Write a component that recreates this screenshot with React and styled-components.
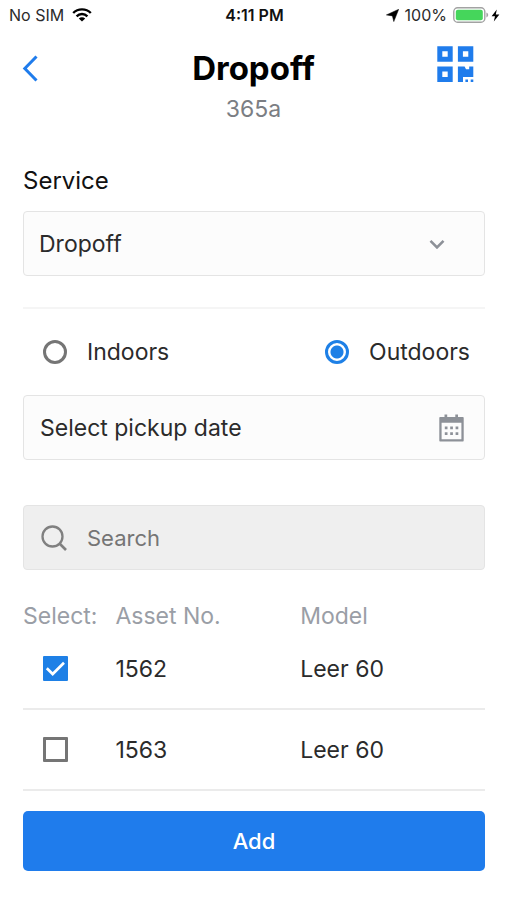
import { useState } from 'react'
import styled, { createGlobalStyle } from 'styled-components'

const assets = [
    { id: '1562', model: 'Leer 60' },
    { id: '1563', model: 'Leer 60' },
]

export default function App() {
    const [place, setPlace] = useState('outdoors')
    const [selected, setSelected] = useState(['1562'])

    const toggle = (id) => {
        setSelected(selected.includes(id) ? selected.filter((s) => s !== id) : [...selected, id])
    }

    return <>
        <GlobalStyle />
        <StatusBar />
        <Header>
            <BackButton type="button" aria-label="Back">
                <svg width="16" height="28" viewBox="0 0 16 28">
                    <path d="M14.5 2.5 L2.8 14.5 L14.5 26.5" fill="none" stroke="#1f7cec" strokeWidth="3" />
                </svg>
            </BackButton>
            <Heading>
                <h1>Dropoff</h1>
                <p>365a</p>
            </Heading>
            <ScanButton type="button" aria-label="Scan code">
                <QrIcon />
            </ScanButton>
        </Header>
        <Main>
            <FieldLabel htmlFor="service">Service</FieldLabel>
            <SelectBox>
                <select id="service" defaultValue="dropoff">
                    <option value="dropoff">Dropoff</option>
                    <option value="pickup">Pickup</option>
                </select>
                <svg width="16" height="10" viewBox="0 0 16 10">
                    <path d="M1.5 1.8 L8 8.4 L14.5 1.8" fill="none" stroke="#8d9198" strokeWidth="2.6" />
                </svg>
            </SelectBox>
            <Divider />
            <Places>
                <PlaceLabel>
                    <Radio
                        name="place"
                        checked={place === 'indoors'}
                        onChange={() => setPlace('indoors')}
                    />
                    Indoors
                </PlaceLabel>
                <PlaceLabel>
                    <Radio
                        name="place"
                        checked={place === 'outdoors'}
                        onChange={() => setPlace('outdoors')}
                    />
                    Outdoors
                </PlaceLabel>
            </Places>
            <DateButton type="button">
                Select pickup date
                <CalendarIcon />
            </DateButton>
            <SearchBox>
                <svg width="26" height="26" viewBox="0 0 26 26">
                    <circle cx="11.5" cy="11.5" r="10" fill="none" stroke="#808080" strokeWidth="2.3" />
                    <path d="M18.5 18.5 L25 25" stroke="#808080" strokeWidth="2.6" />
                </svg>
                <input type="search" placeholder="Search" aria-label="Search" />
            </SearchBox>
            <AssetTable>
                <thead>
                    <tr>
                        <th>Select:</th>
                        <th>Asset No.</th>
                        <th>Model</th>
                    </tr>
                </thead>
                <tbody>
                    {assets.map((asset) => (
                        <tr key={asset.id}>
                            <td>
                                <CheckWrap>
                                    <Checkbox
                                        checked={selected.includes(asset.id)}
                                        onChange={() => toggle(asset.id)}
                                        aria-label={asset.id}
                                    />
                                    <svg width="25" height="25" viewBox="0 0 25 25">
                                        <path d="M3.8 12.2 L9.7 18 L21 6.8" fill="none" stroke="#fff" strokeWidth="2.7" />
                                    </svg>
                                </CheckWrap>
                            </td>
                            <td>{asset.id}</td>
                            <td>{asset.model}</td>
                        </tr>
                    ))}
                </tbody>
            </AssetTable>
            <AddButton type="button">Add</AddButton>
        </Main>
    </>
}

const StatusBar = () => {
    return <StatusContainer>
        <StatusGroup>
            No SIM
            <svg width="20" height="14" viewBox="0 0 20 14" fill="none" stroke="#000" strokeWidth="2.4">
                <path d="M1.2 5 C6 0.2 14 0.2 18.8 5" />
                <path d="M4.6 8.3 C7.6 5.3 12.4 5.3 15.4 8.3" />
                <path d="M6.8 10.4 C8.6 8.8 11.4 8.8 13.2 10.4 L10 13.6 Z" fill="#000" stroke="none" />
            </svg>
        </StatusGroup>
        <Clock>4:11 PM</Clock>
        <StatusGroup $end>
            <svg width="13" height="13" viewBox="0 0 13 13">
                <path d="M12.7 0.3 L7.8 12.6 L6.4 6.9 L0.4 5.9 Z" fill="#000" stroke="#000" strokeWidth="0.5" />
            </svg>
            100%
            <Power>
                <svg width="36" height="16" viewBox="0 0 36 16">
                    <rect x="0.8" y="0.8" width="31" height="14.4" rx="3.8" fill="#fff" stroke="#a2a2a2" strokeWidth="1.4" />
                    <rect x="2.8" y="2.8" width="27" height="10.4" rx="2" fill="#45d65b" />
                    <path d="M33.4 5.6 C35.8 6.4 35.8 9.6 33.4 10.4 Z" fill="#a2a2a2" />
                </svg>
                <svg width="9" height="13" viewBox="0 0 9 13">
                    <path d="M5.8 0.4 L0.6 7.2 H4 L2.8 12.6 L8.4 5.6 H4.8 Z" fill="#000" />
                </svg>
            </Power>
        </StatusGroup>
    </StatusContainer>
}

const QrIcon = () => (
    <svg width="37" height="37" viewBox="0 0 37 37" fill="#1f7cec">
        <path fillRule="evenodd" d="M0.3 0.3 H15.7 V15.7 H0.3 Z M5.3 5.3 V10.7 H10.7 V5.3 Z" />
        <path fillRule="evenodd" d="M20.9 0.3 H36.3 V15.7 H20.9 Z M25.9 5.3 V10.7 H31.3 V5.3 Z" />
        <path fillRule="evenodd" d="M0.3 20.6 H15.7 V36 H0.3 Z M5.3 25.6 V31 H10.7 V25.6 Z" />
        <path d="M20.9 20.6 H27.6 L29 23.2 H32.2 V20.6 H36.3 V31 H26 V36 H20.9 Z" />
        <path d="M28.4 33.4 H31 V36 H28.4 Z M33.7 33.4 H36.3 V36 H33.7 Z" />
    </svg>
)

const CalendarIcon = () => (
    <svg width="25" height="28" viewBox="0 0 25 28" fill="#8d9198">
        <path d="M5.5 0.5 H8.2 V4 H5.5 Z M16.3 0.5 H19 V4 H16.3 Z" />
        <path fillRule="evenodd" d="M1 3 H24 Q24.7 3 24.7 4 V26.4 Q24.7 27.4 24 27.4 H1 Q0.3 27.4 0.3 26.4 V4 Q0.3 3 1 3 Z M2.6 8.8 V25.2 H22.4 V8.8 Z" />
        <path d="M5.8 12.5 H8.5 V15.2 H5.8 Z M11.2 12.5 H13.9 V15.2 H11.2 Z M16.6 12.5 H19.3 V15.2 H16.6 Z" />
        <path d="M5.8 18.2 H8.5 V20.9 H5.8 Z M11.2 18.2 H13.9 V20.9 H11.2 Z M16.6 18.2 H19.3 V20.9 H16.6 Z" />
    </svg>
)

const GlobalStyle = createGlobalStyle`
    * {
        box-sizing: border-box;
    }
    body {
        margin: 0;
        background: #fff;
        color: #2b2b2b;
        font-family: Inter, "Liberation Sans", sans-serif;
        font-size: 23px;
        line-height: 28px;
    }
    button, input, select {
        font: inherit;
        color: inherit;
    }
`;

const StatusContainer = styled.div`
    display: grid;
    grid-template-columns: 1fr auto 1fr;
    align-items: center;
    height: 30px;
    padding: 0 7px 0 9px;
    font-size: 16px;
    line-height: 20px;
`;

const StatusGroup = styled.div`
    display: flex;
    align-items: center;
    justify-content: ${({ $end }) => ($end ? 'flex-end' : 'flex-start')};
    gap: ${({ $end }) => ($end ? '6px' : '8px')};
`;

const Clock = styled.div`
    font-weight: 600;
    color: #111;
`;

const Power = styled.div`
    display: flex;
    align-items: center;
    gap: 2px;
`;

const Header = styled.header`
    display: grid;
    grid-template-columns: 48px 1fr 48px;
    align-items: start;
    padding: 16px 22px 0;
`;

const IconButton = styled.button`
    display: flex;
    padding: 0;
    border: none;
    background: none;
    cursor: pointer;
`;

const BackButton = styled(IconButton)`
    padding-top: 8px;
`;

const ScanButton = styled(IconButton)`
    justify-content: flex-start;
`;

const Heading = styled.div`
    text-align: center;

    h1 {
        margin: 0;
        color: #000;
        font-size: 33px;
        font-weight: 700;
        line-height: 45px;
    }
    p {
        margin: 4px 0 0;
        color: #7b7e83;
    }
`;

const Main = styled.main`
    padding: 44px 22px 28px 23px;
`;

const FieldLabel = styled.label`
    display: block;
    margin-bottom: 16px;
    color: #111;
    font-size: 24px;
`;

const SelectBox = styled.div`
    display: grid;
    align-items: center;
    height: 65px;
    border: 1px solid #e4e4e4;
    border-radius: 4px;
    background: #fcfcfc;

    select, svg {
        grid-area: 1 / 1;
    }
    select {
        appearance: none;
        width: 100%;
        height: 100%;
        padding: 0 60px 0 15px;
        border: none;
        background: none;
    }
    svg {
        justify-self: end;
        margin-right: 39px;
        pointer-events: none;
    }
`;

const Divider = styled.hr`
    height: 2px;
    margin: 31px 0 0;
    border: none;
    background: #f5f5f5;
`;

const Places = styled.div`
    display: flex;
    justify-content: space-between;
    padding: 29px 15px 29px 20px;
`;

const PlaceLabel = styled.label`
    display: flex;
    align-items: center;
    gap: 20px;
`;

const Radio = styled.input.attrs({ type: 'radio' })`
    appearance: none;
    width: 24px;
    height: 24px;
    margin: 0;
    border: 3px solid #757575;
    border-radius: 50%;

    &:checked {
        border-color: #1e80e6;
        background: radial-gradient(circle, #1e80e6 6px, #fff 7px);
    }
`;

const DateButton = styled.button`
    display: flex;
    align-items: center;
    justify-content: space-between;
    width: 100%;
    height: 65px;
    padding: 0 20px 0 16px;
    border: 1px solid #e4e4e4;
    border-radius: 4px;
    background: #fcfcfc;
    text-align: left;
`;

const SearchBox = styled.div`
    display: flex;
    align-items: center;
    gap: 20px;
    height: 65px;
    margin-top: 45px;
    padding: 0 17px;
    border: 1px solid #e4e4e4;
    border-radius: 4px;
    background: #efefef;

    input {
        flex: 1;
        min-width: 0;
        padding: 0;
        border: none;
        background: none;
        outline: none;
        font-size: 22px;
    }
    input::placeholder {
        color: #757575;
    }
`;

const AssetTable = styled.table`
    width: 100%;
    margin-top: 33px;
    border-spacing: 0;
    table-layout: fixed;

    th {
        padding: 0;
        color: #9a9ea6;
        font-weight: 400;
        line-height: 26px;
        text-align: left;
        white-space: nowrap;
    }
    th:first-child {
        width: 20%;
    }
    td {
        height: 81px;
        padding: 0;
        border-bottom: 2px solid #ebebeb;
    }
`;

const CheckWrap = styled.div`
    display: grid;
    width: 25px;
    margin-left: 20px;

    input, svg {
        grid-area: 1 / 1;
    }
    svg {
        pointer-events: none;
    }
`;

const Checkbox = styled.input.attrs({ type: 'checkbox' })`
    appearance: none;
    width: 25px;
    height: 25px;
    margin: 0;
    border: 3px solid #757575;
    border-radius: 1px;

    &:checked {
        border-color: #1e80e6;
        background: #1e80e6;
    }
`;

const AddButton = styled.button`
    width: 100%;
    height: 60px;
    margin-top: 20px;
    border: none;
    border-radius: 5px;
    background: #1f7cec;
    color: #fff;
    font-size: 22px;
    font-weight: 500;
    cursor: pointer;
`;
